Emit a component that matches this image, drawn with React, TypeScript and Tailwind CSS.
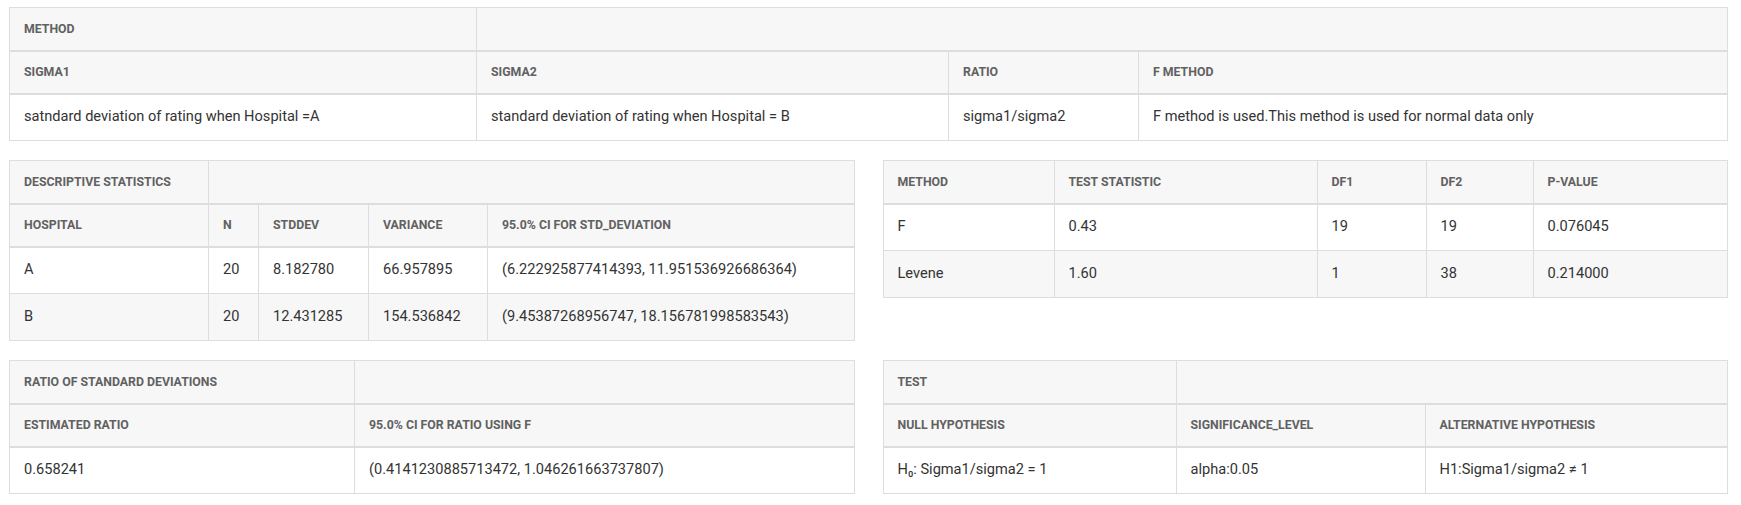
import React from 'react';

type Cell = { text: string; span?: number; w?: string };

const thClass =
  'h-[43px] px-[14px] text-left align-middle text-[12.3px] font-bold uppercase text-[#616161] bg-[#f7f7f7] border border-[#dddddd] border-b-2';
const tdClass =
  'h-[47px] px-[14px] text-left align-middle text-[14.6px] text-[#333333] border border-[#dddddd]';

interface StatTableProps {
  title?: Cell[];
  headers: Cell[];
  rows: string[][];
}

const StatTable: React.FC<StatTableProps> = ({ title, headers, rows }) => {
  return (
    <table className="w-full border-collapse table-fixed">
      <colgroup>
        {headers.map((h, i) => (
          <col key={i} className={h.w} />
        ))}
      </colgroup>
      <thead>
        {title && (
          <tr>
            {title.map((c, i) => (
              <th key={i} colSpan={c.span || 1} className={thClass}>
                {c.text}
              </th>
            ))}
          </tr>
        )}
        <tr>
          {headers.map((h, i) => (
            <th key={i} className={thClass}>
              {h.text}
            </th>
          ))}
        </tr>
      </thead>
      <tbody>
        {rows.map((r, ri) => (
          <tr key={ri} className={ri % 2 === 1 ? 'bg-[#f7f7f7]' : 'bg-white'}>
            {r.map((c, ci) => (
              <td key={ci} className={tdClass}>
                {c}
              </td>
            ))}
          </tr>
        ))}
      </tbody>
    </table>
  );
};

const App: React.FC = () => {
  return (
    <main className="min-h-screen bg-white pl-[9px] pr-[13px] pt-[7px] font-['Roboto','Liberation_Sans',sans-serif]">
      <div className="flex flex-col gap-[19px]">
        <StatTable
          title={[{ text: 'Method' }, { text: '', span: 3 }]}
          headers={[
            { text: 'Sigma1', w: 'w-[467px]' },
            { text: 'Sigma2', w: 'w-[472px]' },
            { text: 'Ratio', w: 'w-[190px]' },
            { text: 'F Method' },
          ]}
          rows={[
            [
              'satndard deviation of rating when Hospital =A',
              'standard deviation of rating when Hospital = B',
              'sigma1/sigma2',
              'F method is used.This method is used for normal data only',
            ],
          ]}
        />

        <div className="grid grid-cols-2 gap-x-[28px] items-start">
          <StatTable
            title={[{ text: 'Descriptive Statistics' }, { text: '', span: 4 }]}
            headers={[
              { text: 'Hospital', w: 'w-[199px]' },
              { text: 'N', w: 'w-[50px]' },
              { text: 'StdDev', w: 'w-[110px]' },
              { text: 'Variance', w: 'w-[119px]' },
              { text: '95.0% CI for std_deviation' },
            ]}
            rows={[
              ['A', '20', '8.182780', '66.957895', '(6.222925877414393, 11.951536926686364)'],
              ['B', '20', '12.431285', '154.536842', '(9.45387268956747, 18.156781998583543)'],
            ]}
          />
          <StatTable
            headers={[
              { text: 'Method', w: 'w-[171px]' },
              { text: 'Test Statistic', w: 'w-[263px]' },
              { text: 'DF1', w: 'w-[109px]' },
              { text: 'DF2', w: 'w-[107px]' },
              { text: 'P-Value' },
            ]}
            rows={[
              ['F', '0.43', '19', '19', '0.076045'],
              ['Levene', '1.60', '1', '38', '0.214000'],
            ]}
          />
        </div>

        <div className="grid grid-cols-2 gap-x-[28px] items-start">
          <StatTable
            title={[{ text: 'Ratio of Standard Deviations' }, { text: '' }]}
            headers={[
              { text: 'Estimated Ratio', w: 'w-[345px]' },
              { text: '95.0% CI for Ratio using F' },
            ]}
            rows={[['0.658241', '(0.4141230885713472, 1.046261663737807)']]}
          />
          <StatTable
            title={[{ text: 'Test' }, { text: '', span: 2 }]}
            headers={[
              { text: 'Null hypothesis', w: 'w-[293px]' },
              { text: 'Significance_level', w: 'w-[249px]' },
              { text: 'Alternative hypothesis' },
            ]}
            rows={[['H₀: Sigma1/sigma2 = 1', 'alpha:0.05', 'H1:Sigma1/sigma2 ≠ 1']]}
          />
        </div>
      </div>
    </main>
  );
};

export default App;
